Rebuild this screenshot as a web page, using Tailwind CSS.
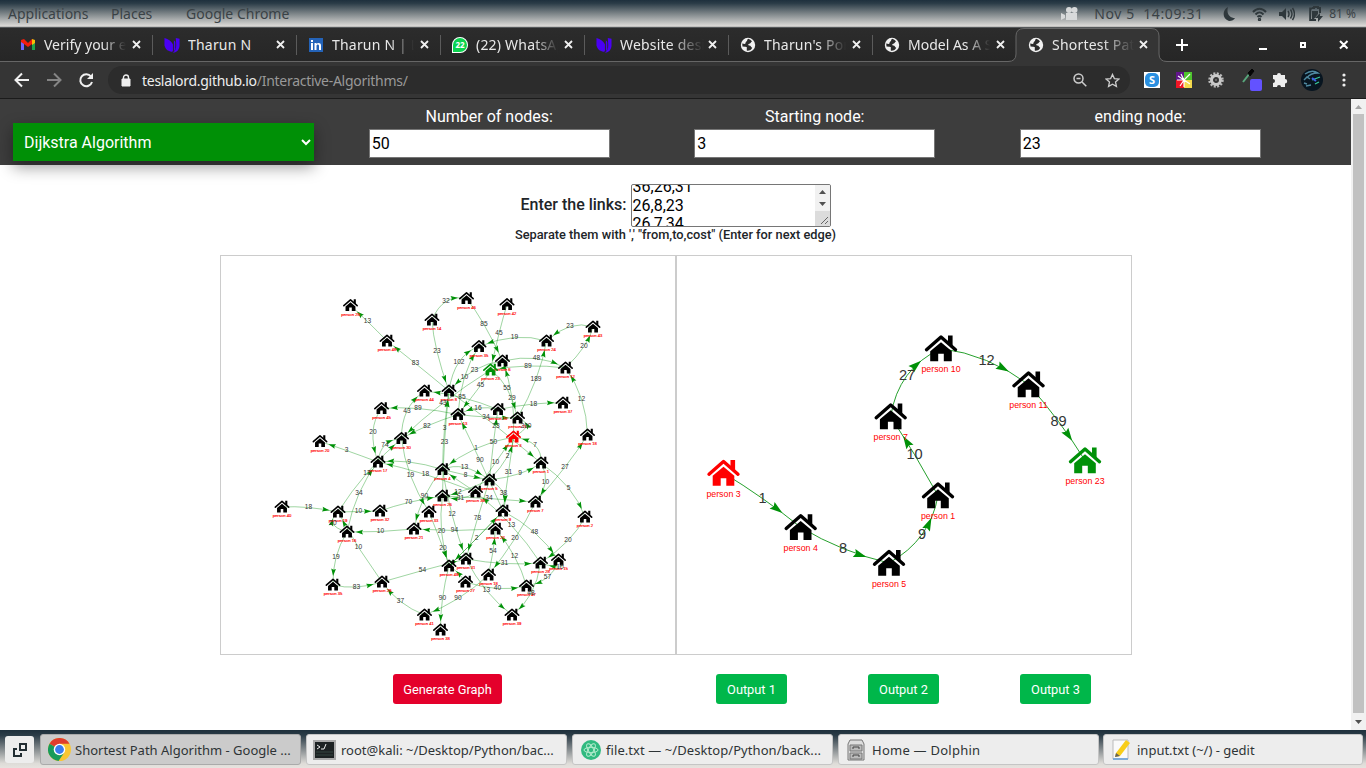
<!DOCTYPE html>
<html lang="en">
<head>
<meta charset="utf-8">
<title>Shortest Path Algorithm</title>
<script src="https://cdn.jsdelivr.net/npm/@tailwindcss/browser@4"></script>
</head>
<body class="w-[1366px] h-[768px] overflow-hidden bg-white font-['Noto_Sans',sans-serif] flex flex-col">
<svg class="hidden">
  <defs>
    <g id="house"><path d="M-14.5 1.5L0-11.2L14.5 1.5" fill="none" stroke="currentColor" stroke-width="3.4" stroke-linecap="round" stroke-linejoin="round"/><path d="M7-12.7h4.6V-1L7-5zM0-6L10.8 3V13H2.8V5.5H-2.8V13H-10.8V3z" fill="currentColor"/></g>
    <g id="globe"><circle cx="8" cy="8" r="7.2" fill="#f1f1f1"/><path d="M8.2 1.8C6.5 2.8 7.8 3.8 6.3 4.6 5 5.3 6.2 6.7 4.8 7.1L2.2 6.6 2.5 9.4 5 9.8C6.5 9.6 7.5 10.4 6.7 11.8L6.9 13.8C9.5 14 11.5 12.6 12.2 10.8 10.8 10.3 11.2 8.6 9.2 8.6 7.8 8.3 8 6.9 9.4 6.8 11 6.7 10.6 4.9 12 4.6 11 3 9.8 2.2 8.2 1.8z" fill="#2b2b2b"/></g>
    <g id="shield"><path d="M0 1C4 2 8 5 9 8V14C9 16 7 16 5 15 2 14 1 12 0 9zM10 3.5L11.5 5V13L10 15.5zM12 1l4 .8V9C16 13 13 17 8.500 16.500 12 15 12.500 12 12.500 8z" fill="#4a00f5"/></g>
  </defs>
</svg>

<!-- desktop panel -->
<div class="h-[28px] shrink-0 flex items-center text-[14px] text-[#3a4246] bg-[linear-gradient(#1e303d_0%,#2b3c47_12%,#848b8e_52%,#dedcd9_94%,#55585a_97%)]">
  <span class="ml-2 -mt-[2px] w-[103px] whitespace-nowrap">Applications</span><span class="-mt-[2px] w-[75px]">Places</span><span class="-mt-[2px] whitespace-nowrap">Google Chrome</span>
  <svg class="ml-auto mr-4" width="17" height="14" viewBox="0 0 17 14" fill="#d8dadb"><circle cx="8" cy="3" r="3"/><circle cx="13.500" cy="3" r="3"/><path d="M5 6h11v7H5zM0 6l4 2v3l-4 2z"/></svg>
  <span class="-mt-[2px] w-[129px] whitespace-pre tracking-[0.6px]">Nov 5  14:09:31</span>
  <svg class="mr-[16px]" width="13" height="14" viewBox="0 0 13 14" fill="#2f383c"><path d="M5 0C-1 3-1 12 6 14c3 0 5-1 6-3C7 11 3 7 5 0z"/></svg>
  <svg class="mr-[12px]" width="15" height="14" viewBox="0 0 15 14" fill="none" stroke="#2f383c" stroke-width="2"><path d="M1 5C5 .5 10 .5 14 5M3.500 7.500c3-3 5-3 8 0M5.500 10c1.500-1.500 2.500-1.500 4 0"/><circle cx="7.500" cy="12.500" r=".7"/></svg>
  <svg class="mr-[14px]" width="16" height="14" viewBox="0 0 16 14"><path d="M0 5h3l4-4v12L3 9H0z" fill="#2f383c"/><path d="M9 4q2 3 0 6M11.500 2.500q3 4.500 0 9M13.500 1q4 6 0 12" fill="none" stroke="#2f383c" stroke-width="1.400"/></svg>
  <svg class="mr-[6px]" width="14" height="16" viewBox="0 0 14 16"><path d="M3 2h2V1h4v1h2v5M7 14H1.200V2.500H3" fill="none" stroke="#2f383c" stroke-width="2"/><path d="M3 5h6v3L5 13H3zM11 7l-5 5h3v4l5-6h-3z" fill="#2f383c"/></svg>
  <span class="text-[12px] mr-[10px] whitespace-nowrap">81 %</span>
</div>

<!-- tab strip -->
<div class="h-[34px] shrink-0 bg-[linear-gradient(#2c2c2c,#262626)] border-b border-[#666] flex items-center pl-[9px] text-[14px] text-[#e8e8e8]">
  <div class="flex h-[20px] w-[144px] shrink-0 items-center border-r border-[#5b5b5b] pl-[11px]"><svg class="w-4 h-4 shrink-0" viewBox="0 0 16 16"><path d="M1 4v9h3V6z" fill="#6d63ff"/><path d="M12 6v7h3V4z" fill="#1ea54b"/><path d="M1 3l3-1 4 4 4-4v5L8 10 4 7 1 5z" fill="#f21d0d"/><path d="M12 2l3 1v3l-3 2z" fill="#f8bd05"/></svg><span class="ml-2 w-[86px] overflow-hidden whitespace-nowrap [mask-image:linear-gradient(90deg,#000_58px,transparent_82px)]">Verify your email</span><svg class="ml-[2px] w-[9px] h-[9px] shrink-0" viewBox="0 0 9 9"><path d="M1 1l7 7M8 1L1 8" stroke="#f0f0f0" stroke-width="1.800"/></svg></div>
  <div class="flex h-[20px] w-[144px] shrink-0 items-center border-r border-[#5b5b5b] pl-[11px]"><svg class="w-4 h-4 shrink-0" viewBox="0 0 16 17"><use href="#shield"/></svg><span class="ml-2 w-[86px] overflow-hidden whitespace-nowrap tracking-[0.2px]">Tharun N</span><svg class="ml-[2px] w-[9px] h-[9px] shrink-0" viewBox="0 0 9 9"><path d="M1 1l7 7M8 1L1 8" stroke="#f0f0f0" stroke-width="1.800"/></svg></div>
  <div class="flex h-[20px] w-[144px] shrink-0 items-center border-r border-[#5b5b5b] pl-[11px]"><svg class="w-4 h-4 shrink-0" viewBox="0 0 16 16"><path d="M1 1h14v14H1z" fill="#2463b8"/><path d="M3 6h2v7H3zM3 3h2v2H3zM6.500 6h2v1c1-1.500 4.500-1.500 4.500 1.500V13h-2V9c0-2-2.500-2-2.500 0v4h-2z" fill="#fff"/></svg><span class="ml-2 w-[86px] overflow-hidden whitespace-nowrap tracking-[0.2px] [mask-image:linear-gradient(90deg,#000_58px,transparent_82px)]">Tharun N | LinkedIn</span><svg class="ml-[2px] w-[9px] h-[9px] shrink-0" viewBox="0 0 9 9"><path d="M1 1l7 7M8 1L1 8" stroke="#f0f0f0" stroke-width="1.800"/></svg></div>
  <div class="flex h-[20px] w-[144px] shrink-0 items-center border-r border-[#5b5b5b] pl-[11px]"><span class="w-4 h-4 shrink-0 rounded-full rounded-bl-sm border border-white bg-[#0bd34f] text-white text-[8px] leading-[14px] font-bold text-center">22</span><span class="ml-2 w-[86px] overflow-hidden whitespace-nowrap tracking-[0.2px] [mask-image:linear-gradient(90deg,#000_58px,transparent_82px)]">(22) WhatsApp</span><svg class="ml-[2px] w-[9px] h-[9px] shrink-0" viewBox="0 0 9 9"><path d="M1 1l7 7M8 1L1 8" stroke="#f0f0f0" stroke-width="1.800"/></svg></div>
  <div class="flex h-[20px] w-[144px] shrink-0 items-center border-r border-[#5b5b5b] pl-[11px]"><svg class="w-4 h-4 shrink-0" viewBox="0 0 16 17"><use href="#shield"/></svg><span class="ml-2 w-[86px] overflow-hidden whitespace-nowrap tracking-[0.2px] [mask-image:linear-gradient(90deg,#000_50px,transparent_84px)]">Website design</span><svg class="ml-[2px] w-[9px] h-[9px] shrink-0" viewBox="0 0 9 9"><path d="M1 1l7 7M8 1L1 8" stroke="#f0f0f0" stroke-width="1.800"/></svg></div>
  <div class="flex h-[20px] w-[144px] shrink-0 items-center border-r border-[#5b5b5b] pl-[11px]"><svg class="w-4 h-4 shrink-0" viewBox="0 0 16 16"><use href="#globe"/></svg><span class="ml-2 w-[86px] overflow-hidden whitespace-nowrap tracking-[0.2px] [mask-image:linear-gradient(90deg,#000_54px,transparent_82px)]">Tharun's Portfolio</span><svg class="ml-[2px] w-[9px] h-[9px] shrink-0" viewBox="0 0 9 9"><path d="M1 1l7 7M8 1L1 8" stroke="#f0f0f0" stroke-width="1.800"/></svg></div>
  <div class="flex h-[20px] w-[143px] shrink-0 items-center pl-[11px]"><svg class="w-4 h-4 shrink-0" viewBox="0 0 16 16"><use href="#globe"/></svg><span class="ml-2 w-[86px] overflow-hidden whitespace-nowrap [mask-image:linear-gradient(90deg,#000_58px,transparent_82px)]">Model As A Service</span><svg class="ml-[2px] w-[9px] h-[9px] shrink-0" viewBox="0 0 9 9"><path d="M1 1l7 7M8 1L1 8" stroke="#f0f0f0" stroke-width="1.800"/></svg></div>
  <div class="relative -mb-px flex h-[34px] w-[145px] shrink-0 items-center pl-[12px]">
    <svg class="absolute -left-2 top-0" width="161" height="34" viewBox="0 0 161 34"><path d="M0 33.500Q8 33.500 8 26V8Q8 .5 16 .5H143Q151 .5 151 8V26Q151 33.500 159 33.500V34H0z" fill="#353535"/><path d="M0 33.500Q8 33.500 8 26V8Q8 .5 16 .5H143Q151 .5 151 8V26Q151 33.500 159 33.500" fill="none" stroke="#666"/></svg>
    <svg class="relative w-4 h-4 shrink-0" viewBox="0 0 16 16"><use href="#globe"/></svg><span class="relative -top-px ml-2 w-[86px] overflow-hidden whitespace-nowrap tracking-[0.2px] [mask-image:linear-gradient(90deg,#000_50px,transparent_82px)]">Shortest Path Algorithm</span><svg class="relative -top-px ml-px w-[9px] h-[9px] shrink-0" viewBox="0 0 9 9"><path d="M1 1l7 7M8 1L1 8" stroke="#f0f0f0" stroke-width="1.800"/></svg></div>
  <svg class="ml-[15px]" width="12" height="12" viewBox="0 0 12 12"><path d="M6 0v12M0 6h12" stroke="#fff" stroke-width="2"/></svg>
  <svg class="ml-auto mr-[17px]" width="90" height="10" viewBox="0 0 90 10" fill="none" stroke="#fff" stroke-width="2"><path d="M0 9h8M42 3h4v4h-4zM81 1l7.500 7.500M88.500 1L81 8.500"/></svg>
</div>

<!-- toolbar -->
<div class="h-[37px] shrink-0 bg-[#353535] border-b border-[#1b1b1b] flex items-center text-[14px]">
  <svg class="ml-[14px]" width="80" height="16" viewBox="0 0 80 16" fill="none" stroke="#f0f0f0" stroke-width="2"><path d="M15 8H2M8 1.500L1.500 8 8 14.500"/><path d="M33 8h13M40 1.500L46.500 8 40 14.500" stroke="#858585"/><path d="M77 4.500A6 6 0 1 0 78 10"/><path d="M79 1v6h-6z" fill="#f0f0f0" stroke="none"/></svg>
  <div class="ml-[14px] w-[1022px] h-[28px] shrink-0 rounded-full bg-[#2c2c2c] flex items-center text-[#eee]">
    <svg class="ml-[13px] mr-[8px]" width="10" height="13" viewBox="0 0 10 13"><path d="M1 5h8v7H1z" fill="#eee" stroke="#eee"/><path d="M2.500 5V3.500a2.500 2.500 0 0 1 5 0V5" fill="none" stroke="#eee" stroke-width="1.400"/></svg>
    <span class="ml-[3px] whitespace-nowrap tracking-[-0.28px]">teslalord.github.io<span class="text-[#999]">/Interactive-Algorithms/</span></span>
    <svg class="ml-auto mr-[18px]" width="14" height="14" viewBox="0 0 14 14" fill="none" stroke="#ccc" stroke-width="1.500"><circle cx="5.500" cy="5.500" r="4.500"/><path d="M3.500 5.500h4M9 9l4.300 4.300"/></svg>
    <svg class="mr-[10px]" width="15" height="15" viewBox="0 0 16 16" fill="none" stroke="#ccc" stroke-width="1.400"><path d="M8 1.500l2 4.400 4.800.5-3.600 3.200 1 4.700L8 11.900l-4.200 2.400 1-4.700L1.200 6.400 6 5.900z"/></svg>
  </div>
  <span class="ml-[14px] w-4 h-4 bg-white p-px"><span class="block w-[14px] h-[14px] rounded-[5px] bg-[#2a8fe0] text-white font-bold text-[11px] leading-[14px] text-center">S</span></span>
  <svg class="ml-4" width="16" height="16" viewBox="0 0 16 16"><path d="M0 0h8v8H0z" fill="#62158c"/><path d="M8 0h8v8H8z" fill="#4ec52e"/><path d="M0 8h8v8H0z" fill="#f01525"/><path d="M8 8h8v8H8z" fill="#f3d94c"/><path d="M8 8L14 2M8 8L2 4M8 8L5 2M8 8H1M8 8l-4 6M8 8v7M8 8l6 4" stroke="#fff" stroke-width="1.200"/></svg>
  <svg class="ml-4" width="16" height="16" viewBox="0 0 16 16"><circle cx="8" cy="8" r="6.500" fill="none" stroke="#bbb" stroke-width="2.500" stroke-dasharray="2 1.400"/><circle cx="8" cy="8" r="4.500" fill="none" stroke="#c9c9c9" stroke-width="3"/><circle cx="8" cy="8" r="1" fill="#777"/></svg>
  <svg class="ml-[18px] shrink-0" width="20" height="22" viewBox="0 0 20 22"><path d="M1 13L8 4" stroke="#58a77c" stroke-width="2"/><path d="M6 4l4-4 2 2-4 5z" fill="#050505" stroke="#050505"/><rect x="8" y="10" width="12" height="12" rx="2" fill="#6352ff"/></svg>
  <svg class="ml-[10px] shrink-0" width="17" height="16" viewBox="0 0 17 16"><path d="M1 3h4a2 2 0 1 1 4 0h4v4a2.200 2.200 0 1 1 0 4.400V15H9a2 2 0 1 0-4 0H1v-4a2 2 0 1 0 0-4z" fill="#eee"/></svg>
  <svg class="ml-[12px] shrink-0" width="22" height="22" viewBox="0 0 22 22"><circle cx="11" cy="11" r="11" fill="#081520"/><path d="M4 5q7-5 13-1-8 0-11 5M3 11l3-3 3 2M5 17l5-1M3 14l3 1" fill="none" stroke="#4f89a0" stroke-width="1.400"/><path d="M11 11l8-3M14 15l4-2" stroke="#39c99c" stroke-width="1.300"/><path d="M11 9l4 3" stroke="#3e61e8" stroke-width="2"/></svg>
  <svg class="ml-[19px] shrink-0" width="4" height="14" viewBox="0 0 4 14" fill="#eee"><circle cx="2" cy="2" r="1.600"/><circle cx="2" cy="7" r="1.600"/><circle cx="2" cy="12" r="1.600"/></svg>
</div>

<!-- page -->
<div class="h-[631px] shrink-0 flex font-[Roboto,sans-serif] text-[16px] text-[#212529]">
  <main class="w-[1351px] bg-white">
    <header class="h-[66px] bg-[#3d3d3d] pl-px flex text-white">
      <div class="w-[325.500px] pl-3 pt-6"><div class="w-[301px] h-[38px] bg-[#009006] shadow-[0_6px_16px_rgba(0,0,0,0.4)] flex items-center justify-between pl-[11px] pr-[3px]"><span class="pt-[2px]">Dijkstra Algorithm</span><svg width="10" height="7" viewBox="0 0 10 7"><path d="M1 1l4 4 4-4" fill="none" stroke="#fff" stroke-width="2"/></svg></div></div>
      <div class="w-[325.500px] pt-[6px] flex flex-col items-center"><label class="h-6 leading-6">Number of nodes:</label><div class="w-[241px] h-[29px] bg-white border border-[#767676] text-black leading-[27px] pl-[2px]">50</div></div>
      <div class="w-[325.500px] pt-[6px] flex flex-col items-center"><label class="h-6 leading-6">Starting node:</label><div class="w-[241px] h-[29px] bg-white border border-[#767676] text-black leading-[27px] pl-[2px]">3</div></div>
      <div class="w-[325.500px] pt-[6px] flex flex-col items-center"><label class="h-6 leading-6">ending node:</label><div class="w-[241px] h-[29px] bg-white border border-[#767676] text-black leading-[27px] pl-[2px]">23</div></div>
    </header>
    <div class="pt-[19px] h-[90px] flex flex-col items-center">
      <div class="flex h-[43px] items-center gap-1 font-medium"><span class="-mt-[2px]">Enter the links:</span>
        <div class="w-[200px] h-[43px] border border-[#767676] rounded-[2px] overflow-hidden flex justify-between font-normal text-black bg-white">
          <div class="pl-px -mt-[7px] leading-[18.500px]">36,26,31<br>26,8,23<br>26,7,34</div>
          <svg width="15" height="41" viewBox="0 0 15 41"><path d="M0 0h15v41H0z" fill="#f1f1f1"/><path d="M0 26h15v15H0z" fill="#dcdcdc"/><path d="M4 9l3.500-4L11 9zM4 17h7l-3.500 4z" fill="#505050"/><path d="M6 39l7-7M10 39l3-3" stroke="#666"/></svg>
        </div></div>
      <p class="text-[12.800px] leading-[16px] font-medium whitespace-nowrap">Separate them with ',' "from,to,cost" (Enter for next edge)</p>
    </div>
    <div class="pl-[220px] flex h-[400px]">
      <div class="w-[456px] border border-[#ccc]"><svg id="full" width="454" height="398" viewBox="221 256 454 398" font-family="Liberation Sans, sans-serif" text-anchor="middle"></svg></div>
      <div class="w-[456px] border border-[#ccc]"><svg id="route" width="454" height="398" viewBox="677 256 454 398" font-family="Liberation Sans, sans-serif" text-anchor="middle"></svg></div>
    </div>
    <div class="pt-[19px] pl-[393px] flex text-white text-[12.800px] leading-[32px] text-center">
      <button class="w-[109px] h-[30px] rounded-[3px] bg-[#e4002b]">Generate Graph</button>
      <button class="ml-[214px] w-[71px] h-[30px] rounded-[3px] bg-[#00b74a]">Output 1</button>
      <button class="ml-[81px] w-[71px] h-[30px] rounded-[3px] bg-[#00b74a]">Output 2</button>
      <button class="ml-[81px] w-[71px] h-[30px] rounded-[3px] bg-[#00b74a]">Output 3</button>
    </div>
  </main>
  <div class="w-[15px] bg-[#f1f1f1] flex flex-col items-center justify-between">
    <svg width="15" height="15" viewBox="0 0 15 15"><path d="M4 10l3.500-4L11 10z" fill="#a3a3a3"/></svg>
    <div class="w-[11px] grow bg-[#c1c1c1]"></div>
    <svg width="15" height="17" viewBox="0 0 15 17"><path d="M4 7h7l-3.500 4z" fill="#505050"/></svg>
  </div>
</div>

<!-- window list -->
<div class="h-[38px] shrink-0 flex items-start pt-1 pl-[5px] text-[13px] text-[#2e3436] bg-[linear-gradient(#1e303c_0%,#2b3c47_14%,#888e91_52%,#dedcd8_88%,#e6e3df)]">
  <div class="mt-[2px] mr-[6px] w-[29px] h-[27px] rounded-[3px] bg-[#ededed] flex items-center justify-center"><svg width="14" height="14" viewBox="0 0 14 14" fill="none" stroke="#222d32" stroke-width="2"><path d="M7 1h6v6H7zM4 6H1v7h7v-3"/></svg></div>
  <div class="mr-[5px] w-[261px] h-[31px] rounded-[3px] border border-[#aaa] bg-[#cbcbcb] flex items-center pl-[7px] gap-[4px] whitespace-nowrap">
    <svg class="w-[23px] h-[23px] shrink-0" viewBox="0 0 24 24"><circle cx="12" cy="12" r="12" fill="#f9c633"/><path d="M12 12L1.600 6A12 12 0 0 1 22.400 6H12z" fill="#df3d2e"/><path d="M1.600 6A12 12 0 0 0 11 24l6-9-5-3z" fill="#179b5c"/><circle cx="12" cy="12" r="6" fill="#fff"/><circle cx="12" cy="12" r="4.600" fill="#397df0"/></svg><span class="pt-[3px]">Shortest Path Algorithm - Google ...</span></div>
  <div class="mr-[5px] w-[261px] h-[31px] rounded-[3px] border border-[#c5c5c5] bg-[#ededed] flex items-center pl-[6px] gap-[5px] whitespace-nowrap">
    <svg class="w-[23px] h-[20px] shrink-0" viewBox="0 0 23 20"><rect x="1" y="1" width="21" height="18" fill="#1d2223" stroke="#aaa" stroke-width="2"/><path d="M4 5l3 2-3 2M8 9h3M13 4l-2 5" stroke="#eee" fill="none"/><path d="M3 12h17M3 15h17" stroke="#354440"/></svg><span class="pt-[3px]">root@kali: ~/Desktop/Python/bac...</span></div>
  <div class="mr-[5px] w-[261px] h-[31px] rounded-[3px] border border-[#c5c5c5] bg-[#ededed] flex items-center pl-[8px] gap-[5px] whitespace-nowrap">
    <svg class="w-5 h-5 shrink-0" viewBox="0 0 20 20"><circle cx="10" cy="10" r="10" fill="#31ba80"/><g fill="none" stroke="#b5ecce"><ellipse cx="10" cy="10" rx="7" ry="2.700"/><ellipse cx="10" cy="10" rx="7" ry="2.700" transform="rotate(60 10 10)"/><ellipse cx="10" cy="10" rx="7" ry="2.700" transform="rotate(120 10 10)"/></g></svg><span class="pt-[3px] tracking-[0.07px]">file.txt — ~/Desktop/Python/back...</span></div>
  <div class="mr-[4px] w-[261px] h-[31px] rounded-[3px] border border-[#c5c5c5] bg-[#ededed] flex items-center pl-[8px] gap-[7px] whitespace-nowrap">
    <svg class="w-[18px] h-[22px] shrink-0" viewBox="0 0 18 22"><path d="M3 1h12l2 4v16H1V5z" fill="#ddd" stroke="#777"/><path d="M3 6h12v6H3zM3 14h12v6H3z" fill="#bbb" stroke="#777"/><path d="M6 10V8h6v2M6 18v-2h6v2" fill="none" stroke="#444"/></svg><span class="pt-[3px] tracking-[0.25px]">Home — Dolphin</span></div>
  <div class="w-[260px] h-[31px] rounded-[3px] border border-[#c5c5c5] bg-[#ededed] flex items-center pl-[8px] gap-[7px] whitespace-nowrap">
    <svg class="w-[18px] h-[21px] shrink-0" viewBox="0 0 18 21"><path d="M1 1h15v19H1z" fill="#fafafa" stroke="#bbb"/><path d="M1 20h15" stroke="#7eabd8" stroke-width="2"/><path d="M4 14L14 1l4 3L8 17l-5 1z" fill="#f8cd19"/><path d="M4 14l4 3-5 1z" fill="#66635c"/></svg><span class="pt-[3px]">input.txt (~/) - gedit</span></div>
</div>

<script>
const NS = 'http://www.w3.org/2000/svg';
function add(parent, tag, attrs, text) {
  const e = document.createElementNS(NS, tag);
  for (const k in attrs) e.setAttribute(k, attrs[k]);
  if (text !== undefined) e.textContent = text;
  parent.appendChild(e);
}
// nodes: key -> [x, y, label?]; edges: [from, to, cost, label x, label y]
function draw(id, nodes, edges, o) {
  const svg = document.getElementById(id);
  for (const [f, t, , mx, my] of edges) {
    const a = nodes[f], b = nodes[t];
    const cx = 2 * mx - (a[0] + b[0]) / 2, cy = 2 * my - (a[1] + b[1]) / 2;
    add(svg, 'path', {d: `M${a[0]} ${a[1]}Q${cx} ${cy} ${b[0]} ${b[1]}`, fill: 'none', stroke: '#008f08', 'stroke-width': o.line, 'stroke-opacity': o.alpha});
    const at = s => [(1-s)*(1-s)*a[0] + 2*s*(1-s)*cx + s*s*b[0], (1-s)*(1-s)*a[1] + 2*s*(1-s)*cy + s*s*b[1]];
    let s = 1, p = at(s);
    while (s > 0.55 && Math.hypot(p[0]-b[0], p[1]-b[1]) < o.gap) { s -= 0.01; p = at(s); }
    const q = at(s - 0.04), ang = Math.atan2(p[1]-q[1], p[0]-q[0]) * 180 / Math.PI;
    add(svg, 'path', {d: 'M0 0L-13-4.200L-11 0L-13 4.200z', fill: '#009108', transform: `translate(${p[0]} ${p[1]}) rotate(${ang}) scale(${o.arrow})`});
  }
  for (const k in nodes) {
    const [x, y, name] = nodes[k];
    const color = k === '3' ? '#f00' : k === '23' ? '#009108' : '#000';
    add(svg, 'use', {href: '#house', transform: `translate(${x} ${y + o.shift}) scale(${o.scale})`, color});
    add(svg, 'text', {x, y: y + o.dy, 'font-size': o.small, fill: '#f00', stroke: '#f00', 'stroke-width': o.bold}, 'person ' + (name || k));
  }
  for (const [, , c, x, y] of edges) if (c !== '') add(svg, 'text', {x, y: y + o.big * 0.3, 'font-size': o.big, fill: '#343434'}, c);
}
draw('full', {
 25:[350.5,305.5],48:[387,341],14:[432,320],46:[466.5,298.5],42:[507,304.5],43:[593,327],24:[546.5,341],35:[479,346.5],6:[502.5,361],23:[490.5,370],12:[565.5,368],44:[424.5,391],8:[449,391],45:[381.5,408.5],13:[458,414.5],10:[498,409.5],11:[517.5,418],37:[563,403],3:[513.5,437],18:[587.5,435],30:[401.5,438.5],20:[320,441.5],17:[378,462],4:[442.5,469.5],1:[541,463],5:[489.5,480],40:[282,507],19:[338,512],16:[347,532],32:[380,511],33:[429,512],26:[442.5,496],36:[475.5,492],7:[535.5,502],9:[503,511],22:[495.5,529],21:[414,529],2:[585,517],50:[333,585,35],29:[382,582],49:[449,566],31:[466,559],27:[465.5,582],28:[488.5,575,18],34:[540.5,563,28],15:[558.5,560],47:[526.5,586],39:[512,615],41:[424.5,615],38:[440.5,630]
}, [
 [48,25,13,367.5,321.5],[8,48,83,415.5,363.5],[14,46,32,446,301.5],[14,8,23,437,351.5],[30,44,43,407,411],[13,45,89,418,408.5],[13,30,82,427,426],[23,30,43,443,403],[45,17,20,373,432],[17,30,74,385,445],[17,20,3,346.5,450.5],[4,17,9,409,462],
 [46,6,85,484,324.5],[42,23,45,499,333.5],[43,24,23,570,326.5],[24,35,19,514.5,337.5],[8,35,102,459,362],[6,12,48,536.5,358.5],[12,23,89,528,366],[12,43,20,584,346.5],[6,8,23,474.5,370],[13,35,10,464.5,377],[23,13,45,480.5,385.5],[23,11,55,507,388.5],[3,6,29,512,398],[11,24,189,536,379],[10,37,18,533.5,404],[18,12,12,581.5,399],[10,44,85,462,397.5],[10,13,16,478,408],[13,11,34,486,417],[3,11,200,526,426],[8,1,23,496,426],[5,10,50,493.5,442.5],[3,4,1,476,448.5],[9,13,90,480,460.5],[36,3,10,495.5,462.5],[5,3,2,507.5,456.5],[3,9,31,508.5,472.5],[1,3,7,535,445.5],[7,18,27,565,467],[4,8,3,444.5,428.5],[26,8,23,444.5,442.5],
 [4,5,13,464.5,467.5],[4,5,8,465.5,475],[5,1,9,520,473.5],[36,17,18,425.5,474.5],[30,33,19,410.5,475.5],[19,30,13,367,473],[16,17,34,359,493.5],[4,21,90,424.5,496.5],[32,26,70,408.5,502.5],[40,19,18,308.5,507.5],[19,32,10,358.5,511.5],[16,19,20,333,523.5],[21,16,10,380.5,531.5],[29,19,10,358.5,547.5],[16,50,19,336,557.5],[50,29,83,356.5,587],[29,31,54,422.5,570.5],[41,29,37,400.5,601.5],
 [26,49,20,441.5,531.5],[33,49,20,443,548],[4,31,12,452,514.5],[22,21,94,454.5,530.5],[5,26,12,458,492.5],[36,26,31,460.5,498.5],[26,7,34,489,498.5],[5,9,38,503.5,493.5],[7,28,20,515,538.5],[5,31,78,477.5,518.5],[49,9,2,476.5,538.5],[9,49,'',476.5,538.5],[34,36,13,511.5,525.5],[9,15,48,534.5,532.5],[1,7,10,545.5,482.5],[1,2,5,568.5,488],[2,34,20,568,540.5],[28,22,54,493,551.5],[47,22,12,514.5,556.5],[31,34,31,504.5,563.5],[27,47,40,497.5,588.5],[31,39,13,486.5,590.5],[15,47,57,547.5,577.5],[15,34,10,560,567],[34,39,48,531,593.5],[49,38,90,442.5,598.5],[28,41,90,458,598.5],[27,49,'',457,572],[36,4,'',459,481]
], {scale:0.46,shift:-0.5,dy:10,small:4.2,bold:0.15,big:6.6,line:0.9,alpha:0.42,gap:8.5,arrow:0.56});
draw('route', {3:[723.5,473],4:[800.7,527.3],5:[889,563],1:[938,495.500],7:[890.7,416.5],10:[941,348.5],11:[1028.5,384.5],23:[1085,460.5]},
 [[3,4,1,762.5,498.5],[4,5,8,843,548.5],[5,1,9,922,534.5],[1,7,10,914.5,454.5],[7,10,27,907,375.5],[10,11,12,986.5,360.5],[11,23,89,1058.5,421.5]],
 {scale:1,shift:-0.3,dy:23.5,small:8.8,bold:0,big:14.6,line:1,alpha:0.85,gap:23,arrow:1});
</script>
</body>
</html>
